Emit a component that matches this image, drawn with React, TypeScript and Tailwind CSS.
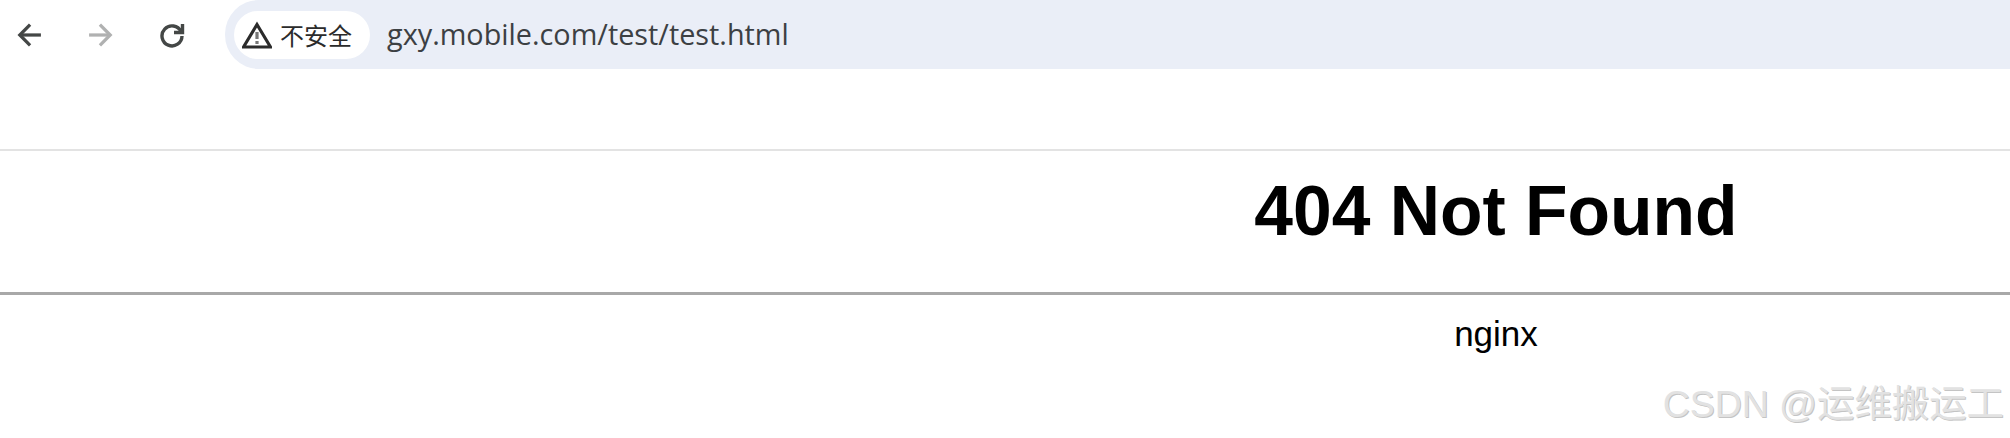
import React from "react";

function BackIcon({ className }: { className: string }) {
  return (
    <svg viewBox="0 0 24 24" className={className} fill="none" stroke="currentColor" strokeWidth="3">
      <path d="M23 12H4" />
      <path d="M13 2.5L3.5 12l9.5 9.5" />
    </svg>
  );
}

function ReloadIcon() {
  return (
    <svg viewBox="0 0 28 28" className="w-[28px] h-[28px] text-[#444746]" fill="none" stroke="currentColor" strokeWidth="3.4">
      <path d="M23 10.5A10 10 0 1 0 24 15" />
      <path d="M24.5 3v8.5H16" />
    </svg>
  );
}

function WarningIcon() {
  return (
    <svg viewBox="0 0 30 28" className="w-[30px] h-[28px] text-[#2b2b2b]" fill="none" stroke="currentColor" strokeWidth="3.2">
      <path d="M15 3.5L1.5 26h27z" strokeLinejoin="miter" />
      <path d="M15 11v7" stroke="#777" />
      <path d="M15 20v3" stroke="#777" />
    </svg>
  );
}

export default function App() {
  return (
    <div className="relative w-[2010px] h-[438px] overflow-hidden bg-white font-['Liberation_Sans',sans-serif]">
      <div className="flex items-center h-[69px]">
        <div className="flex items-center w-[225px] pl-[16px] shrink-0">
          <BackIcon className="w-[26px] h-[26px] text-[#444746]" />
          <BackIcon className="w-[26px] h-[26px] text-[#b0b1b1] ml-[46px] rotate-180" />
          <div className="ml-[44px]">
            <ReloadIcon />
          </div>
        </div>
        <div className="flex-1 h-[69px] bg-[#eaeef7] rounded-l-[34px] flex items-center pl-[9px]">
          <div className="flex items-center w-[136px] h-[48px] bg-white rounded-[24px] pl-[8px] gap-[8px]">
            <WarningIcon />
            <span className="text-[24px] text-[#2b2b2b] font-['Noto_Sans_CJK_SC',sans-serif]">不安全</span>
          </div>
          <span className="ml-[17px] mb-[2px] text-[28.8px] text-[#3c4043] font-['Open_Sans',sans-serif]">gxy.mobile.com/test/test.html</span>
        </div>
      </div>
      <div className="h-[80px]" />
      <div className="h-[2px] bg-[#e3e3e3]" />
      <div className="w-[2992px] text-center">
        <h1 className="text-[69.6px] font-bold text-black leading-[80px] mt-[20px]">404 Not Found</h1>
        <div className="h-[3px] bg-[#a8a8a8] mt-[41px]" />
        <p className="text-[35px] text-black leading-[40px] mt-[19px]">nginx</p>
      </div>
      <div className="absolute right-[6px] top-[381px] text-[37.4px] leading-[46px] whitespace-nowrap text-[#e2e2e2] font-['Liberation_Sans','Noto_Sans_CJK_SC',sans-serif] [text-shadow:1px_1px_0_#c4c4c4]">
        CSDN @运维搬运工
      </div>
    </div>
  );
}
